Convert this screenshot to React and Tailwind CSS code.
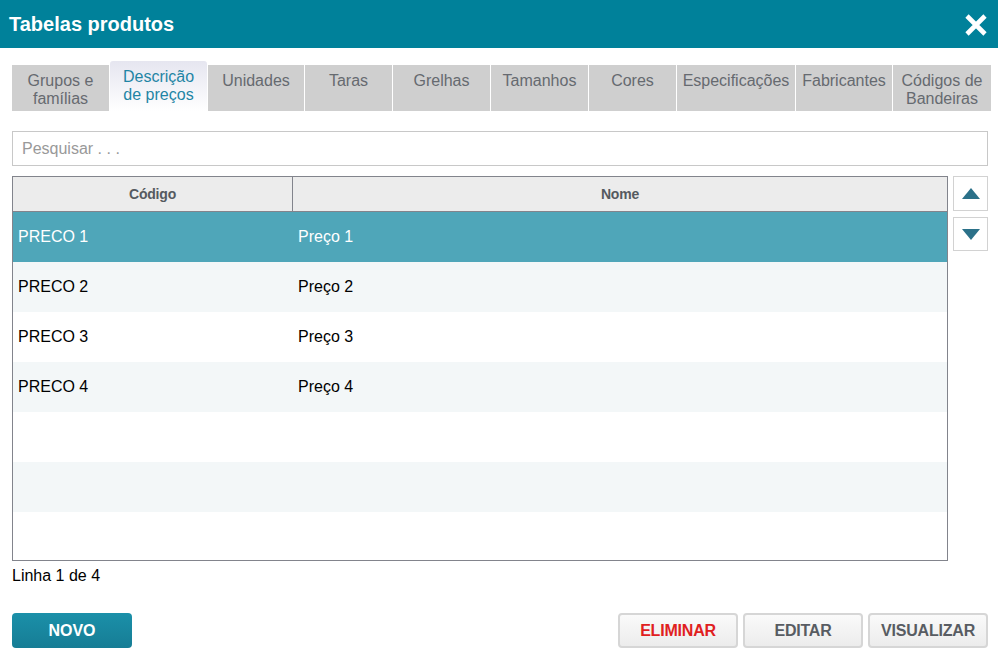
import React from "react";

const tabs = [
  { label: ["Grupos e", "famílias"], w: "w-[97px]" },
  { label: ["Descrição", "de preços"], w: "w-[97px]", active: true },
  { label: ["Unidades"], w: "w-[96px]" },
  { label: ["Taras"], w: "w-[87px]" },
  { label: ["Grelhas"], w: "w-[97px]" },
  { label: ["Tamanhos"], w: "w-[97px]" },
  { label: ["Cores"], w: "w-[87px]" },
  { label: ["Especificações"], w: "w-[118px]" },
  { label: ["Fabricantes"], w: "w-[96px]" },
  { label: ["Códigos de", "Bandeiras"], w: "w-[98px]" },
];

const rows = [
  ["PRECO 1", "Preço 1"],
  ["PRECO 2", "Preço 2"],
  ["PRECO 3", "Preço 3"],
  ["PRECO 4", "Preço 4"],
  ["", ""],
  ["", ""],
  ["", ""],
];

export default function App() {
  return (
    <div className="w-[998px] h-[659px] bg-white font-['Liberation_Sans',Arial,sans-serif] overflow-hidden">
      {/* title bar */}
      <div className="h-[48px] bg-[#00819a] flex items-center justify-between pl-[9px] pr-[10px]">
        <h1 className="text-white font-bold text-[20px] -mt-[1px]">Tabelas produtos</h1>
        <svg width="24" height="24" viewBox="0 0 24 24" className="mt-[1px]">
          <path d="M3 3 L21 21 M21 3 L3 21" stroke="white" strokeWidth="4.6" strokeLinecap="butt" />
        </svg>
      </div>

      <div className="pl-[12px] pr-[10px]">
        {/* tabs */}
        <div className="flex items-end gap-[1px] h-[63px] w-[979px]">
          {tabs.map((t, i) =>
            t.active ? (
              <div
                key={i}
                className={`${t.w} shrink-0 h-[50px] rounded-t-[3px] bg-gradient-to-b from-[#e6e6f0] to-white flex flex-col items-center pt-[7px] text-[16px] leading-[18px] text-[#1f85a5]`}
              >
                {t.label.map((l) => (
                  <span key={l}>{l}</span>
                ))}
              </div>
            ) : (
              <div
                key={i}
                className={`${t.w} shrink-0 h-[46px] bg-[#cfcfcf] flex flex-col items-center pt-[7px] text-[16px] leading-[18px] text-[#666a70]`}
              >
                {t.label.map((l) => (
                  <span key={l}>{l}</span>
                ))}
              </div>
            )
          )}
        </div>

        {/* search */}
        <div className="mt-[20px] h-[35px] border border-[#c8c8c8] flex items-center px-[9px]">
          <input
            className="w-full outline-none text-[16px] text-[#333] placeholder:text-[#999] bg-transparent"
            placeholder="Pesquisar . . ."
          />
        </div>

        {/* grid + scroll buttons */}
        <div className="mt-[10px] flex gap-[5px]">
          <div className="w-[936px] h-[385px] border border-[#82848c] overflow-hidden">
            <div className="flex h-[35px] bg-[#ececec] border-b border-[#82848c] text-[14px] font-bold text-[#555a60] tracking-[-0.2px]">
              <div className="w-[280px] border-r border-[#82848c] flex items-center justify-center">Código</div>
              <div className="flex-1 flex items-center justify-center">Nome</div>
            </div>
            {rows.map((r, i) => (
              <div
                key={i}
                className={`flex items-center h-[50px] text-[16px] ${
                  i === 0 ? "bg-[#4fa6b9] text-white" : i % 2 === 1 ? "bg-[#f3f7f8] text-black" : "bg-white text-black"
                }`}
              >
                <div className="w-[280px] pl-[5px]">{r[0]}</div>
                <div className="flex-1 pl-[5px]">{r[1]}</div>
              </div>
            ))}
          </div>
          <div className="flex flex-col gap-[6px]">
            <button className="w-[35px] h-[35px] border border-[#d2d2d2] bg-white flex items-center justify-center">
              <svg width="18" height="11" viewBox="0 0 18 11">
                <path d="M9 0 L18 11 L0 11 Z" fill="#2b7189" />
              </svg>
            </button>
            <button className="w-[35px] h-[34px] border border-[#d2d2d2] bg-white flex items-center justify-center">
              <svg width="18" height="11" viewBox="0 0 18 11">
                <path d="M0 0 L18 0 L9 11 Z" fill="#2b7189" />
              </svg>
            </button>
          </div>
        </div>

        <div className="mt-[4px] text-[16px] text-black leading-[22px]">Linha 1 de 4</div>

        {/* action buttons */}
        <div className="mt-[26px] flex items-center justify-between">
          <button className="w-[120px] h-[35px] rounded-[4px] bg-gradient-to-b from-[#1b90a9] to-[#167d95] text-white font-bold text-[16px]">
            NOVO
          </button>
          <div className="flex gap-[5px]">
            <button className="w-[120px] h-[35px] rounded-[4px] border-2 border-[#d6d6d6] bg-gradient-to-b from-[#fafafa] to-[#ececec] text-[#e0201e] font-bold text-[16px] tracking-[-0.2px]">
              ELIMINAR
            </button>
            <button className="w-[120px] h-[35px] rounded-[4px] border-2 border-[#d6d6d6] bg-gradient-to-b from-[#fafafa] to-[#ececec] text-[#585c62] font-bold text-[16px] tracking-[-0.2px]">
              EDITAR
            </button>
            <button className="w-[120px] h-[35px] rounded-[4px] border-2 border-[#d6d6d6] bg-gradient-to-b from-[#fafafa] to-[#ececec] text-[#585c62] font-bold text-[16px] tracking-[-0.2px]">
              VISUALIZAR
            </button>
          </div>
        </div>
      </div>
    </div>
  );
}
